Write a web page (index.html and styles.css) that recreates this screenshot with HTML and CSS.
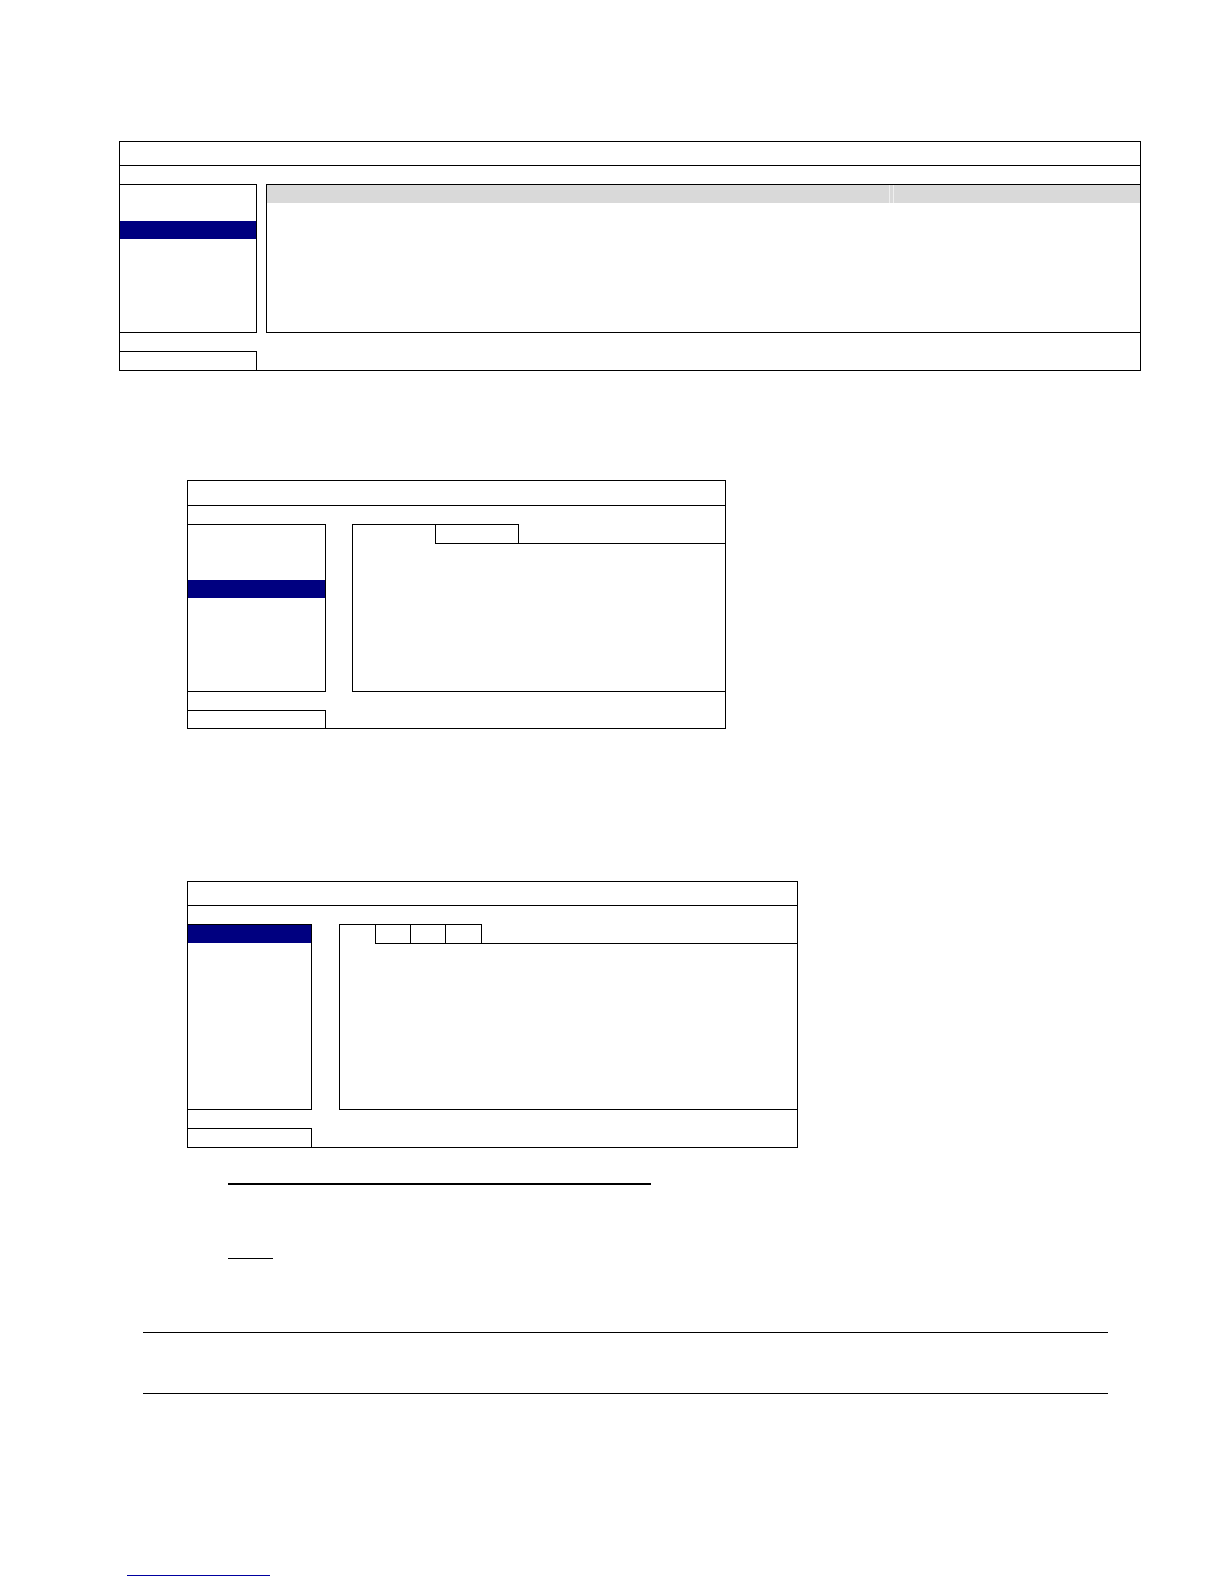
FILE: index.html
```
<!DOCTYPE html>
<html lang="en">
<head>
<meta charset="utf-8">
<title>Menu diagrams</title>
<link rel="stylesheet" href="styles.css">
</head>
<body>
<div class="page">

  <div class="dlg dlg1">
    <div class="dlg-title"></div>
    <div class="dlg-body">
      <div class="side">
        <div class="side-item"></div>
        <div class="side-item"></div>
        <div class="side-item active"></div>
      </div>
      <div class="main">
        <div class="grid-head">
          <div class="gh-cell gh-first"></div>
          <div class="gh-cell gh-second"></div>
        </div>
      </div>
    </div>
    <div class="dlg-foot"><div class="foot-box"></div></div>
  </div>

  <div class="dlg dlg2">
    <div class="dlg-title"></div>
    <div class="dlg-body">
      <div class="side">
        <div class="side-item active"></div>
      </div>
      <div class="main tabbed">
        <div class="tab-row">
          <div class="tab-lead"></div>
          <div class="tab tab-first"></div>
          <div class="tab-rest"></div>
        </div>
      </div>
    </div>
    <div class="dlg-foot"><div class="foot-box"></div></div>
  </div>

  <div class="dlg dlg3">
    <div class="dlg-title"></div>
    <div class="dlg-body">
      <div class="side">
        <div class="side-item active"></div>
      </div>
      <div class="main tabbed">
        <div class="tab-row">
          <div class="tab-lead"></div>
          <div class="tab tab-first"></div>
          <div class="tab tab-mid"></div>
          <div class="tab tab-last"></div>
          <div class="tab-rest"></div>
        </div>
      </div>
    </div>
    <div class="dlg-foot"><div class="foot-box"></div></div>
  </div>

  <div class="rule-heading"></div>
  <div class="rule-note"></div>
  <div class="hr hr-top"></div>
  <div class="hr hr-bottom"></div>
  <div class="link-line"></div>

</div>
</body>
</html>
```

FILE: styles.css
```
* { box-sizing: border-box; }

html, body {
  margin: 0;
  padding: 0;
  background: #ffffff;
  font-family: "Liberation Sans", Arial, sans-serif;
}

.page {
  width: 1224px;
  min-height: 1584px;
  padding-top: 141px;
}

/* ---------- dialog frame ---------- */
.dlg {
  border: 1px solid #000;
  background: #fff;
}

.dlg-title {
  border-bottom: 1px solid #000;
}

.dlg-body {
  display: flex;
  margin-top: 18px;
}

.side {
  border-top: 1px solid #000;
  border-right: 1px solid #000;
  border-bottom: 1px solid #000;
  flex: none;
}

.side-item { height: 18px; }
.side-item.active { background: #000080; }

.main {
  flex: 1;
  border-left: 1px solid #000;
  border-bottom: 1px solid #000;
}

.dlg-foot { margin-top: 18px; }

.foot-box {
  border-top: 1px solid #000;
  border-right: 1px solid #000;
}

/* ---------- dialog 1 ---------- */
.dlg1 { width: 1022px; height: 230px; margin-left: 119px; }
.dlg1 .dlg-title { height: 24px; }
.dlg1 .dlg-body { height: 149px; }
.dlg1 .side { width: 137px; }
.dlg1 .main { margin-left: 9px; border-top: 1px solid #000; }
.dlg1 .foot-box { width: 137px; height: 19px; }

.grid-head {
  display: flex;
  height: 18px;
  background: #d9d9d9;
}
.gh-first { width: 623px; border-right: 1px solid #efefef; }
.gh-second { flex: 1; margin-left: 3px; border-left: 1px solid #efefef; }

/* ---------- tabbed panels ---------- */
.tab-row { display: flex; height: 20px; }
.tab-lead { border-top: 1px solid #000; flex: none; }
.tab {
  flex: none;
  border-top: 1px solid #000;
  border-right: 1px solid #000;
  border-bottom: 1px solid #000;
}
.tab-first { border-left: 1px solid #000; }
.tab-rest { flex: 1; border-bottom: 1px solid #000; }

/* ---------- dialog 2 ---------- */
.dlg2 { width: 539px; height: 249px; margin-left: 187px; margin-top: 109px; }
.dlg2 .dlg-title { height: 25px; }
.dlg2 .dlg-body { height: 168px; }
.dlg2 .side { width: 138px; padding-top: 55px; }
.dlg2 .main { margin-left: 26px; }
.dlg2 .tab-lead { width: 82px; }
.dlg2 .tab-first { width: 84px; }
.dlg2 .foot-box { width: 138px; height: 18px; }

/* ---------- dialog 3 ---------- */
.dlg3 { width: 611px; height: 267px; margin-left: 187px; margin-top: 152px; }
.dlg3 .dlg-title { height: 24px; }
.dlg3 .dlg-body { height: 186px; }
.dlg3 .side { width: 124px; }
.dlg3 .main { margin-left: 27px; }
.dlg3 .tab-lead { width: 35px; }
.dlg3 .tab-first { width: 36px; }
.dlg3 .tab-mid { width: 35px; }
.dlg3 .tab-last { width: 36px; }
.dlg3 .foot-box { width: 124px; height: 19px; }

/* ---------- text rules ---------- */
.rule-heading {
  width: 423px;
  height: 2px;
  margin-left: 228px;
  margin-top: 35px;
  background: #000;
}

.rule-note {
  width: 45px;
  height: 1px;
  margin-left: 228px;
  margin-top: 73px;
  background: #000;
}

.hr {
  width: 965px;
  height: 1px;
  margin-left: 143px;
  background: #000;
}
.hr-top { margin-top: 73px; }
.hr-bottom { margin-top: 60px; }

.link-line {
  width: 143px;
  height: 1px;
  margin-left: 127px;
  margin-top: 181px;
  background: #0000a0;
}
```
